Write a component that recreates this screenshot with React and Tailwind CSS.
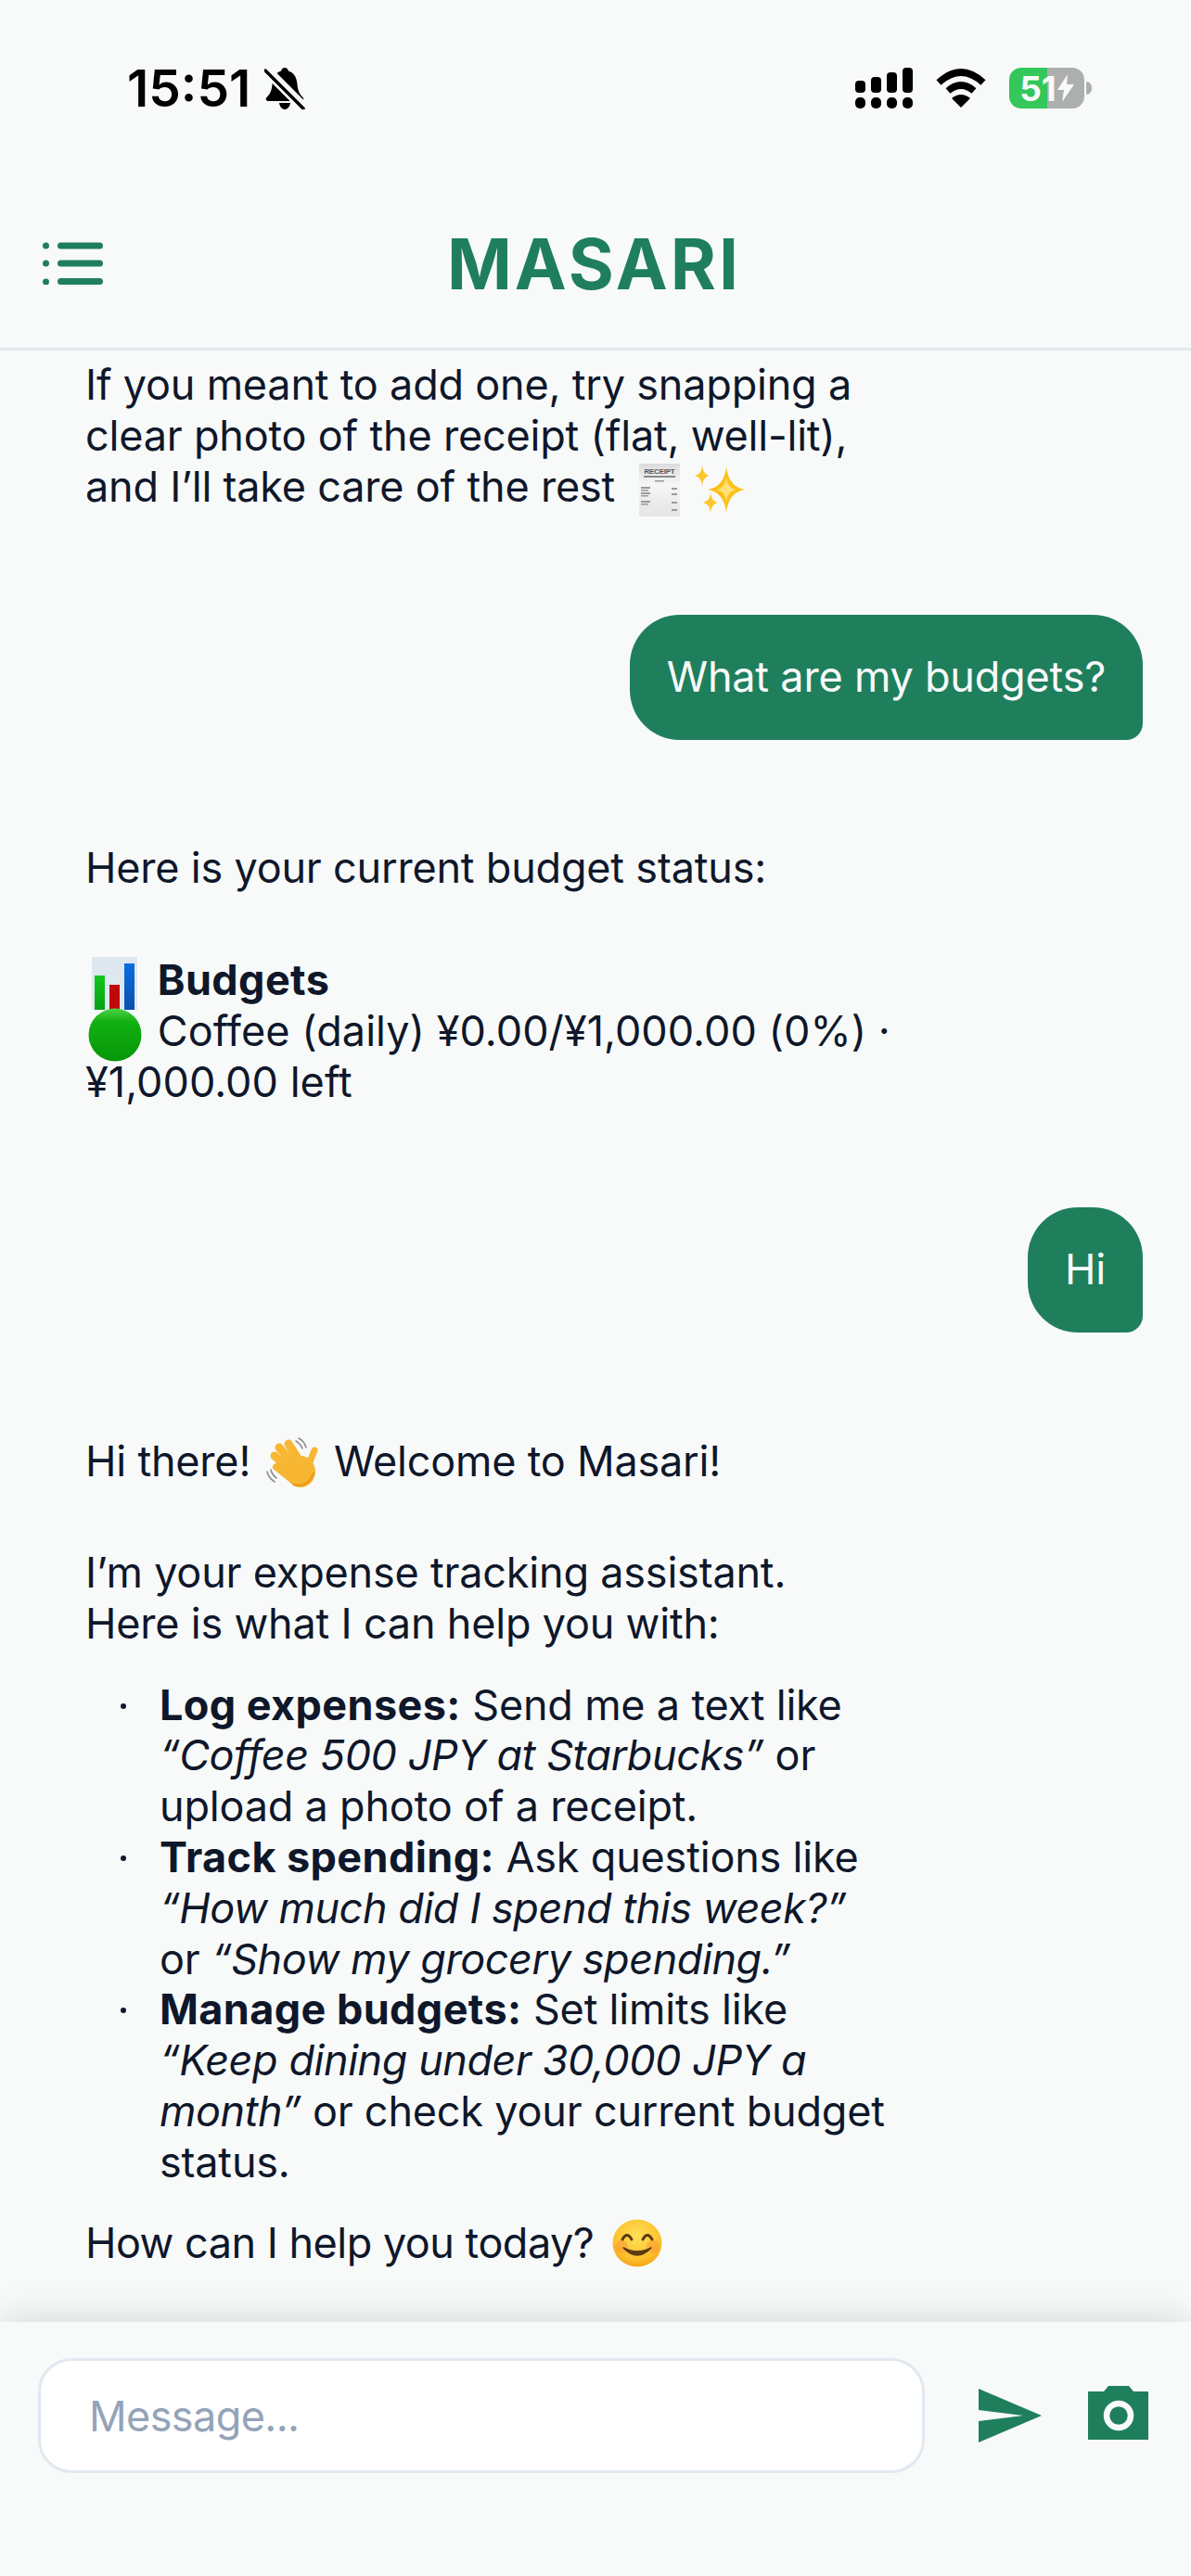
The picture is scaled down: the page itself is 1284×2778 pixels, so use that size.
import React from 'react';

const Emoji = ({ className, w, h, children }) => (
  <svg viewBox={`0 0 ${w} ${h}`} width={w} height={h} className={`inline-block align-middle -my-6 ${className}`}>
    {children}
  </svg>
);

const ReceiptEmoji = () => (
  <Emoji w={44} h={57} className="ml-[13px] mr-[2px]">
    <defs>
      <linearGradient id="paper" x1="0" y1="0" x2="0" y2="1">
        <stop offset="0" stopColor="#dcdcdc" />
        <stop offset="0.4" stopColor="#f6f6f6" />
        <stop offset="1" stopColor="#e4e4e4" />
      </linearGradient>
    </defs>
    <rect width="44" height="57" fill="url(#paper)" />
    <text x="22" y="11" textAnchor="middle" fontSize="8" fontWeight="700" fill="#555" fontFamily="Liberation Sans, sans-serif" textLength="33" lengthAdjust="spacingAndGlyphs">RECEIPT</text>
    <rect x="5" y="13" width="34" height="2" fill="#8a8a8a" />
    <rect x="17" y="18" width="10" height="1.5" fill="#999" />
    {[25, 31, 40].map((y) => (
      <g key={y} fill="#9a9a9a">
        <rect x="2" y={y} width="10" height="2" />
        <rect x="2" y={y + 3} width="8" height="1.5" />
        <rect x="35" y={y + 1} width="6" height="2" />
      </g>
    ))}
    <rect x="35" y="49" width="6" height="2" fill="#9a9a9a" />
  </Emoji>
);

const star = (cx, cy, rx, ry) =>
  `M${cx},${cy - ry} Q${cx + rx * 0.12},${cy - ry * 0.12} ${cx + rx},${cy} Q${cx + rx * 0.12},${cy + ry * 0.12} ${cx},${cy + ry} Q${cx - rx * 0.12},${cy + ry * 0.12} ${cx - rx},${cy} Q${cx - rx * 0.12},${cy - ry * 0.12} ${cx},${cy - ry}Z`;

const SparklesEmoji = () => (
  <Emoji w={56} h={52}>
    <path d={star(36, 26, 20, 25)} fill="#fcc21b" />
    <path d={star(36, 26, 10, 13)} fill="#ffe27a" />
    <path d={star(10, 11, 8, 11)} fill="#fdc72e" />
    <path d={star(19, 40, 8, 11)} fill="#fdc72e" />
  </Emoji>
);

const ChartEmoji = () => (
  <Emoji w={49} h={57} className="ml-[7px] mr-[9px]">
    <defs>
      <linearGradient id="gbar" x1="0" y1="0" x2="0" y2="1">
        <stop offset="0" stopColor="#12c81e" />
        <stop offset="1" stopColor="#06a012" />
      </linearGradient>
      <linearGradient id="bbar" x1="0" y1="0" x2="0" y2="1">
        <stop offset="0" stopColor="#0a6de0" />
        <stop offset="1" stopColor="#0a4fae" />
      </linearGradient>
    </defs>
    <rect width="49" height="57" fill="#dfe8ef" />
    <rect x="3" y="20" width="11" height="37" fill="url(#gbar)" />
    <rect x="19" y="30" width="11" height="27" fill="#c00808" />
    <rect x="35" y="7" width="11" height="50" fill="url(#bbar)" />
  </Emoji>
);

const GreenCircle = () => (
  <Emoji w={58} h={58} className="ml-[3px] mr-[4px]">
    <defs>
      <linearGradient id="gcircle" x1="0" y1="0" x2="0" y2="1">
        <stop offset="0" stopColor="#4fd34a" />
        <stop offset="0.25" stopColor="#12b012" />
        <stop offset="1" stopColor="#069606" />
      </linearGradient>
    </defs>
    <circle cx="29" cy="29" r="28.5" fill="url(#gcircle)" />
  </Emoji>
);

const WaveEmoji = () => (
  <Emoji w={57} h={56} className="ml-[4px] mr-[4px] -translate-y-[3px]">
    <g stroke="#8c8c8c" strokeWidth="1.6" fill="none" strokeLinecap="round">
      <path d="M35,2 Q41,5 43,12" />
      <path d="M32,5 Q37,8 39,13" />
      <path d="M1,38 Q2,44 9,49" />
      <path d="M5,36 Q6,41 11,45" />
    </g>
    <g stroke="#f7b733" strokeLinecap="round" fill="none">
      <path d="M24,8 L38,30" strokeWidth="9" />
      <path d="M14,12 L32,33" strokeWidth="9" />
      <path d="M9,21 L28,38" strokeWidth="9" />
      <path d="M11,33 L26,45" strokeWidth="8" />
      <path d="M52,15 L45,33" strokeWidth="7" />
    </g>
    <ellipse cx="37" cy="38" rx="16" ry="17" fill="#f7b733" />
    <path d="M30,52 Q44,56 51,40" stroke="#ec9a1e" strokeWidth="2.5" fill="none" strokeLinecap="round" />
  </Emoji>
);

const SmileEmoji = () => (
  <Emoji w={54} h={52} className="ml-[7px] -translate-y-[3px]">
    <defs>
      <radialGradient id="face" cx="0.5" cy="0.35" r="0.7">
        <stop offset="0" stopColor="#ffe15a" />
        <stop offset="0.7" stopColor="#fcc02c" />
        <stop offset="1" stopColor="#f49a12" />
      </radialGradient>
    </defs>
    <ellipse cx="27" cy="26" rx="26.5" ry="25.5" fill="url(#face)" />
    <circle cx="10" cy="30" r="7" fill="#fb8f3c" opacity="0.45" />
    <circle cx="44" cy="30" r="7" fill="#fb8f3c" opacity="0.45" />
    <g stroke="#5d3a10" strokeWidth="3" fill="none" strokeLinecap="round">
      <path d="M11,22 Q16,13 21,22" />
      <path d="M33,22 Q38,13 43,22" />
    </g>
    <path d="M12,31 Q27,47 42,31 Q27,39 12,31Z" fill="#5d3a10" stroke="#5d3a10" strokeWidth="1.5" strokeLinejoin="round" />
  </Emoji>
);

const StatusBar = () => (
  <div className="flex h-[210px] items-start justify-between pl-[137px] pr-[107px] pt-[73px]">
    <div className="flex items-center gap-[15px]">
      <span className="text-[55px] font-semibold leading-[45px] text-black">15:51</span>
      <svg width="44" height="45" viewBox="0 0 44 45">
        <path d="M22 0c-2 0-3.500 1.500-3.800 3.500C11 5.500 9 12 8.500 18c-.5 6-2 10-6 14-1.500 1.600-.8 4 2 4h35c3 0 3.500-2.500 2-4-4-4-5.500-8-6-14-.5-6-2.500-12.500-9.700-14.500C25.500 1.500 24 0 22 0zM16 38c.6 4 3 7 6 7s5.400-3 6-7z" fill="#000" />
        <path d="M0 2 L42 44" stroke="#f8fafa" strokeWidth="9" />
        <path d="M1 3 L42 44" stroke="#000" strokeWidth="3.500" strokeLinecap="round" />
        <path d="M5.500 0 L44 38.500" stroke="#f8fafa" strokeWidth="3" />
      </svg>
    </div>
    <div className="flex items-center">
      <svg width="62" height="44" viewBox="0 0 62 44" fill="#000">
        <rect x="0" y="14" width="11" height="13" rx="4" />
        <rect x="17" y="10" width="11" height="17" rx="4" />
        <rect x="34" y="5" width="11" height="22" rx="4" />
        <rect x="51" y="0" width="11" height="27" rx="4" />
        <rect x="0" y="32" width="11" height="12" rx="5" />
        <rect x="17" y="32" width="11" height="12" rx="5" />
        <rect x="34" y="32" width="11" height="12" rx="5" />
        <rect x="51" y="32" width="11" height="12" rx="5" />
      </svg>
      <svg width="54" height="42" viewBox="0 0 54 42" className="ml-[25px]">
        <g fill="none" stroke="#000" strokeWidth="7.500">
          <path d="M3 15 Q27 -7 51 15" />
          <path d="M13 24 Q27 12 41 24" />
        </g>
        <path d="M17 32 Q27 24 37 32 L27 42 Z" fill="#000" />
      </svg>
      <div className="ml-[25px] flex h-[44px] w-[81px] items-center justify-center rounded-[13px] bg-[linear-gradient(90deg,#34c759_50.500%,#adaeae_50.500%)]">
        <span className="text-[37px] font-bold leading-none text-[#f8fafa]">51</span>
        <svg width="18" height="30" viewBox="0 0 18 30" className="ml-px">
          <path d="M11 0 L0 17 H7 L5 30 L18 11 H10 Z" fill="#f8fafa" />
        </svg>
      </div>
      <div className="ml-[2px] h-[14px] w-[6px] rounded-r-full bg-[#adaeae]" />
    </div>
  </div>
);

const Header = () => (
  <div className="relative flex h-[168px] items-start justify-center border-b-[3px] border-[#e2e8f0]">
    <svg width="65" height="46" viewBox="0 0 65 46" className="absolute left-[46px] top-[51px]" fill="#1f7f5c">
      <circle cx="3.500" cy="4" r="3.500" />
      <circle cx="3.500" cy="23" r="3.500" />
      <circle cx="3.500" cy="43" r="3.500" />
      <rect x="16" y="0.500" width="49" height="7" rx="3.500" />
      <rect x="16" y="19.500" width="49" height="7" rx="3.500" />
      <rect x="16" y="39" width="49" height="7" rx="3.500" />
    </svg>
    <h1 className="pr-[3px] pt-[30px] text-[75px] font-bold leading-[90px] tracking-[3px] text-[#1f7f5c]">MASARI</h1>
  </div>
);

const UserBubble = ({ children, className = '' }) => (
  <div className={`flex justify-end ${className}`}>
    <div className="rounded-[54px] rounded-br-[18px] bg-[#1f7f5c] px-[40px] py-[40px] text-[#f8fafa]">{children}</div>
  </div>
);

const Bold = ({ children }) => <b className="font-bold tracking-[0.4px]">{children}</b>;
const Em = ({ children }) => <i className="tracking-[-0.45px]">{children}</i>;

const bullet = 'relative before:absolute before:left-[-42px] before:top-[25px] before:h-[6px] before:w-[6px] before:rounded-full before:bg-[#0f172a]';

const Chat = () => (
  <div className="flex h-[2126px] flex-col gap-[111px] overflow-hidden pl-[92px] pr-[52px] pt-[10px] text-[45px] font-[370] leading-[54.8px] tracking-[-0.2px] text-[#0f172a]">
    <div className="max-w-[868px]">
      If you meant to add one, try snapping a clear photo of the receipt (flat, well-lit), and I’ll take care of the rest <ReceiptEmoji /> <SparklesEmoji />
    </div>
    <UserBubble>What are my budgets?</UserBubble>
    <div className="max-w-[868px]">
      <p className="mb-[66px]">Here is your current budget status:</p>
      <p className="tracking-[0.05px]">
        <ChartEmoji /> <Bold>Budgets</Bold>
        <br />
        <GreenCircle /> Coffee (daily) ¥0.00/¥1,000.00 (0%) · ¥1,000.00 left
      </p>
    </div>
    <UserBubble className="-mt-[3px] mb-px">Hi</UserBubble>
    <div className="max-w-[868px]">
      <p className="mb-[65px]">
        Hi there! <WaveEmoji /> Welcome to Masari!
      </p>
      <p>I’m your expense tracking assistant. Here is what I can help you with:</p>
      <ul className="mb-[32px] mt-[33px] pl-[80px]">
        <li className={bullet}>
          <Bold>Log expenses:</Bold> Send me a text like <Em>“Coffee 500 JPY at Starbucks”</Em> or upload a photo of a receipt.
        </li>
        <li className={bullet}>
          <Bold>Track spending:</Bold> Ask questions like <Em>“How much did I spend this week?”</Em> or <Em>“Show my grocery spending.”</Em>
        </li>
        <li className={bullet}>
          <Bold>Manage budgets:</Bold> Set limits like <Em>“Keep dining under 30,000 JPY a month”</Em> or check your current budget status.
        </li>
      </ul>
      <p className="tracking-[-0.5px]">
        How can I help you today? <SmileEmoji />
      </p>
    </div>
  </div>
);

const Footer = () => (
  <div className="relative flex flex-1 items-start bg-[#f8fafa] pl-[41px] pt-[39px] shadow-[0_0_40px_rgba(0,0,0,0.16)]">
    <input
      placeholder="Message..."
      className="h-[124px] w-[956px] rounded-[36px] border-[3px] border-[#e2e8f0] bg-white pl-[52px] text-[45px] tracking-[-0.6px] outline-none placeholder:text-[#94a3b8]"
    />
    <svg width="68" height="58" viewBox="0 0 68 58" className="ml-[58px] mt-[33px]">
      <path d="M0 0 L68 29 L0 58 L0 35 L48 29 L0 23 Z" fill="#1f7f5c" />
    </svg>
    <svg width="65" height="58" viewBox="0 0 65 58" className="ml-[50px] mt-[30px]">
      <path d="M0 6 H17 L22 0 H44 L49 6 H65 V58 H0 Z" fill="#1f7f5c" />
      <circle cx="33" cy="32" r="13" fill="none" stroke="#f8fafa" strokeWidth="6.500" />
    </svg>
  </div>
);

export default function App() {
  return (
    <div className="flex h-[2778px] w-[1284px] flex-col overflow-hidden bg-[#f8fafa] font-['Inter',sans-serif]">
      <StatusBar />
      <Header />
      <Chat />
      <Footer />
    </div>
  );
}
